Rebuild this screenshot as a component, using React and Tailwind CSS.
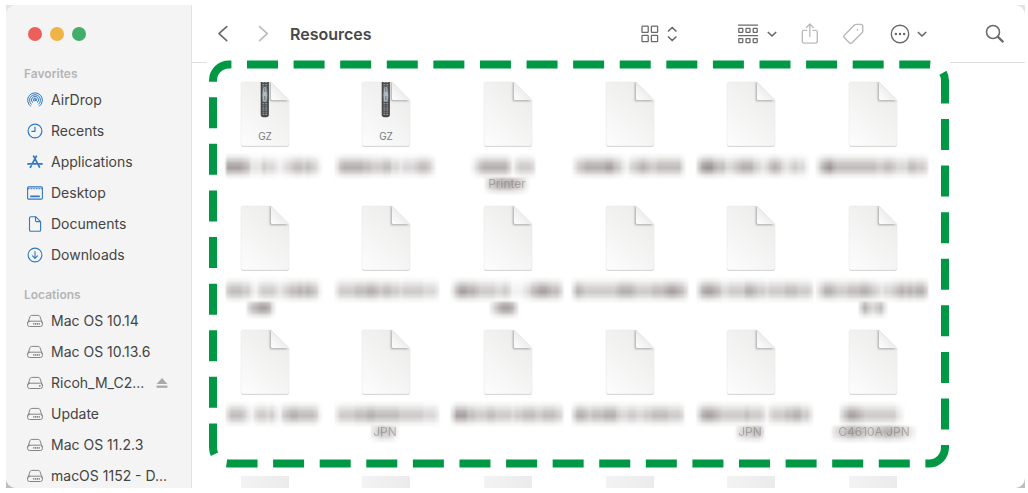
import React from "react";

const stroke = {
  fill: "none",
  stroke: "currentColor",
  strokeLinecap: "round",
  strokeLinejoin: "round",
};

function AirDropIcon() {
  return (
    <svg viewBox="0 0 16 16" className="h-4 w-4" {...stroke} strokeWidth="1">
      <path d="M3.6 14.2A7.4 7.4 0 1 1 12.4 14.2" />
      <path d="M4.2 12.2A5.5 5.5 0 1 1 11.8 12.2" />
      <path d="M5.300 10.3A3.6 3.6 0 1 1 10.700 10.3" />
      <path d="M6.8 9A1.7 1.7 0 1 1 9.2 9" />
      <circle cx="8" cy="8" r="0.4" fill="currentColor" />
    </svg>
  );
}

function ClockIcon() {
  return (
    <svg viewBox="0 0 16 16" className="h-4 w-4" {...stroke} strokeWidth="1.2">
      <circle cx="8" cy="8" r="6.9" />
      <path d="M8 4v4.3H4.8" />
    </svg>
  );
}

function AppsIcon() {
  return (
    <svg viewBox="0 0 16 16" className="h-4 w-4" {...stroke} strokeWidth="1.7">
      <path d="M6.6 2.2l5.9 10.9M9.4 2.2L5.3 9.6M4.2 11.8l-.8 1.5M1 9.9h8M12.2 9.9H15" />
    </svg>
  );
}

function DesktopIcon() {
  return (
    <svg viewBox="0 0 16 16" className="h-4 w-4" {...stroke} strokeWidth="1.1">
      <rect x="0.6" y="1.9" width="14.8" height="12.2" rx="1.2" />
      <path d="M1 3.6h14" strokeDasharray="0.9 0.7" strokeLinecap="butt" />
      <path d="M3.2 11.4h9.6" strokeWidth="1.8" strokeLinecap="butt" />
    </svg>
  );
}

function DocumentIcon() {
  return (
    <svg viewBox="0 0 16 16" className="h-4 w-4" {...stroke} strokeWidth="1.1">
      <path d="M3.8.7h4.8l5 5v8.2a1.3 1.3 0 0 1-1.3 1.3H3.8a1.3 1.3 0 0 1-1.3-1.3V2A1.3 1.3 0 0 1 3.8.7z" />
      <path d="M8.5.9v3.7a1 1 0 0 0 1 1h3.9" />
    </svg>
  );
}

function DownloadIcon() {
  return (
    <svg viewBox="0 0 16 16" className="h-4 w-4" {...stroke} strokeWidth="1.1">
      <circle cx="8" cy="8" r="6.9" />
      <path d="M8 4.5v6.6M5.5 8.8L8 11.3l2.5-2.5" />
    </svg>
  );
}

function DriveIcon({ external }) {
  return (
    <svg viewBox="0 0 16 16" className="h-4 w-4" {...stroke} strokeWidth="1">
      <path d="M.7 10.3L3 3.6A1.8 1.8 0 0 1 4.7 2.4h6.6A1.8 1.8 0 0 1 13 3.6l2.3 6.7" />
      <rect x="0.6" y="8.2" width="14.8" height="5.3" rx="1.9" />
      {external ? (
        <circle cx="12.6" cy="10.9" r="0.4" />
      ) : (
        <path d="M6.2 10.9h6.6" strokeWidth="1.6" strokeDasharray="1.2 0.6" strokeLinecap="butt" />
      )}
    </svg>
  );
}

const favorites = [
  ["AirDrop", AirDropIcon],
  ["Recents", ClockIcon],
  ["Applications", AppsIcon],
  ["Desktop", DesktopIcon],
  ["Documents", DocumentIcon],
  ["Downloads", DownloadIcon],
];

const locations = [
  { name: "Mac OS 10.14" },
  { name: "Mac OS 10.13.6" },
  { name: "Ricoh_M_C2...", external: true },
  { name: "Update" },
  { name: "Mac OS 11.2.3" },
  { name: "macOS 1152 - D..." },
];

function Sidebar() {
  return (
    <aside className="w-[186px] shrink-0 overflow-hidden border-r border-[#e2e2e2] bg-[#f4f4f4]">
      <div className="flex h-[58px] items-center gap-2 pl-[22px]">
        <button aria-label="Close" className="h-3.5 w-3.5 rounded-full bg-[#ec5f5b]" />
        <button aria-label="Minimize" className="h-3.5 w-3.5 rounded-full bg-[#f0b347]" />
        <button aria-label="Zoom" className="h-3.5 w-3.5 rounded-full bg-[#41ae6b]" />
      </div>
      <nav>
        <h2 className="pl-[18px] text-[12px] leading-[21px] font-semibold text-[#b5b5b5]">Favorites</h2>
        <ul>
          {favorites.map(([name, Icon]) => (
            <li key={name}>
              <a href="#" className="flex h-[31px] items-center gap-2 pl-[21px] text-[14px]">
                <span className="text-[#3178c2]"><Icon /></span>
                {name}
              </a>
            </li>
          ))}
        </ul>
        <h2 className="mt-3.5 pl-[18px] text-[12px] leading-[21px] font-semibold text-[#b5b5b5]">Locations</h2>
        <ul>
          {locations.map(({ name, external }) => (
            <li key={name} className="flex h-[31px] items-center">
              <a href="#" className="flex items-center gap-2 pl-[21px] text-[14px] whitespace-nowrap">
                <span className="text-[#858585]"><DriveIcon external={external} /></span>
                {name}
              </a>
              {external && (
                <button aria-label="Eject" className="ml-3 text-[#a9a9a9]">
                  <svg viewBox="0 0 12 12" className="h-3 w-3" fill="currentColor">
                    <path d="M6 .9l5.4 6.2H.6z" />
                    <rect x="0.6" y="8.6" width="10.8" height="2.2" />
                  </svg>
                </button>
              )}
            </li>
          ))}
        </ul>
      </nav>
    </aside>
  );
}

function ChevronDown() {
  return (
    <svg viewBox="0 0 12 12" className="h-3 w-3" {...stroke} strokeWidth="1.7">
      <path d="M2.3 4.5L6 8l3.7-3.5" />
    </svg>
  );
}

function Toolbar() {
  return (
    <header className="flex h-[57px] items-center pr-5 pl-6 text-[#6a6a6a]">
      <button aria-label="Back">
        <svg viewBox="0 0 16 20" className="h-5 w-4" {...stroke} strokeWidth="1.7">
          <path d="M10.7 2.6L3 9.6l7.7 7" />
        </svg>
      </button>
      <button aria-label="Forward" className="ml-6 text-[#b9b9b9]">
        <svg viewBox="0 0 16 20" className="h-5 w-4" {...stroke} strokeWidth="1.6">
          <path d="M3.6 2.6l7.7 7-7.7 7" />
        </svg>
      </button>
      <h1 className="ml-[18px] text-[16px] font-semibold text-[#484848]">Resources</h1>
      <button aria-label="View as icons" className="ml-auto flex items-center gap-2">
        <svg viewBox="0 0 18 18" className="h-[18px] w-[18px]" {...stroke} strokeWidth="1.3">
          <rect x="1" y="1.2" width="6.2" height="6.2" rx="0.6" />
          <rect x="10.4" y="1.2" width="6.2" height="6.2" rx="0.6" />
          <rect x="1" y="10.4" width="6.2" height="6.2" rx="0.6" />
          <rect x="10.4" y="10.4" width="6.2" height="6.2" rx="0.6" />
        </svg>
        <svg viewBox="0 0 12 18" className="h-[18px] w-3" {...stroke} strokeWidth="1.7">
          <path d="M1.500 6l3.7-3.5L8.900 6M1.500 12l3.7 3.5L8.900 12" />
        </svg>
      </button>
      <button aria-label="Group items" className="ml-[59px] flex items-center gap-2">
        <svg viewBox="0 0 20 20" className="h-5 w-5" {...stroke} strokeWidth="1.3" strokeLinecap="butt">
          <path d="M0 1.1h20M0 11.6h20" />
          <rect x="0.8" y="4.4" width="4" height="4" rx="0.5" />
          <rect x="8" y="4.4" width="4" height="4" rx="0.5" />
          <rect x="15.2" y="4.4" width="4" height="4" rx="0.5" />
          <rect x="0.8" y="14.6" width="4" height="4" rx="0.5" />
          <rect x="8" y="14.6" width="4" height="4" rx="0.5" />
          <rect x="15.2" y="14.6" width="4" height="4" rx="0.5" />
        </svg>
        <ChevronDown />
      </button>
      <button aria-label="Share" className="ml-[23px] text-[#bcbcbc]">
        <svg viewBox="0 0 18 22" className="h-[22px] w-[18px]" {...stroke} strokeWidth="1.4">
          <path d="M5.6 7.4H3a1.7 1.7 0 0 0-1.7 1.7v9.3a1.7 1.7 0 0 0 1.7 1.7h11.6a1.7 1.7 0 0 0 1.7-1.7V9.1a1.7 1.7 0 0 0-1.7-1.7H12" />
          <path d="M8.8 13.4V1.2M5.4 4.4l3.4-3.3 3.4 3.3" />
        </svg>
      </button>
      <button aria-label="Edit tags" className="ml-6 text-[#b9b9b9]">
        <svg viewBox="0 0 22 22" className="h-[22px] w-[22px]" {...stroke} strokeWidth="1.4">
          <path d="M11.2 2.2L1.3 12.3a1.6 1.6 0 0 0 0 2.3l5.2 5.3a1.6 1.6 0 0 0 2.3 0L19 9.8a2.6 2.6 0 0 0 .8-1.9V3.3a1.9 1.9 0 0 0-1.9-1.9h-4.8a2.6 2.6 0 0 0-1.9.8z" />
          <circle cx="14.4" cy="6.9" r="0.8" fill="currentColor" stroke="none" />
        </svg>
      </button>
      <button aria-label="More" className="ml-[25px] flex items-center gap-1.5">
        <svg viewBox="0 0 20 20" className="h-5 w-5" {...stroke} strokeWidth="1.4">
          <circle cx="10" cy="10" r="8.7" />
          <g fill="currentColor" stroke="none">
            <circle cx="5.9" cy="10" r="1.25" />
            <circle cx="10" cy="10" r="1.25" />
            <circle cx="14.1" cy="10" r="1.25" />
          </g>
        </svg>
        <ChevronDown />
      </button>
      <button aria-label="Search" className="ml-[57px]">
        <svg viewBox="0 0 20 20" className="h-5 w-5" {...stroke} strokeWidth="1.6">
          <circle cx="8" cy="8" r="6.5" />
          <path d="M12.9 12.9l4.9 4.7" strokeWidth="2.2" />
        </svg>
      </button>
    </header>
  );
}

function FileIcon({ gz }) {
  return (
    <svg viewBox="0 0 50 67" className="h-[67px] w-[50px]">
      <defs>
        <linearGradient id="paper" x1="0.1" y1="1" x2="0.8" y2="0">
          <stop offset="0" stopColor="#fcfcfc" />
          <stop offset="1" stopColor="#ebebea" />
        </linearGradient>
        <linearGradient id="fold" x1="0" y1="1" x2="0.55" y2="0.45">
          <stop offset="0" stopColor="#ffffff" />
          <stop offset="1" stopColor="#ebebeb" />
        </linearGradient>
        <filter id="soft" x="-50%" y="-50%" width="200%" height="200%">
          <feGaussianBlur stdDeviation="1.3" />
        </filter>
        <clipPath id="sheet">
          <path d="M3 1H31L49 19V63a2 2 0 0 1-2 2H3a2 2 0 0 1-2-2V3a2 2 0 0 1 2-2z" />
        </clipPath>
      </defs>
      <path d="M3 2H31L49 20V63.700a2 2 0 0 1-2 2H3a2 2 0 0 1-2-2V4a2 2 0 0 1 2-2z" fill="#c4c4c4" />
      <path
        d="M3 1H31L49 19V63a2 2 0 0 1-2 2H3a2 2 0 0 1-2-2V3a2 2 0 0 1 2-2z"
        fill="url(#paper)"
        stroke="#e6e6e6"
        strokeWidth="0.5"
      />
      <g clipPath="url(#sheet)">
        <path d="M30 1V20H48L31 1z" fill="#808080" opacity="0.65" filter="url(#soft)" />
      </g>
      <path d="M31 1V17.500a1.500 1.500 0 0 0 1.500 1.500H49z" fill="url(#fold)" />
      {gz && (
        <g>
          <path d="M20.700 1h8.200v32.500a2.800 2.800 0 0 1-2.800 2.800h-2.600a2.800 2.800 0 0 1-2.800-2.800z" fill="#47494b" />
          <path d="M24.800 1v33.500" stroke="#a9adb0" strokeWidth="4.800" strokeDasharray="0.8 1.100" />
          <path d="M24.800 1v33.500" stroke="#47494b" strokeWidth="0.900" />
          <path d="M23.200 6h3.200l1.100 8-.7 7h-4l-.7-7z" fill="#b0bac1" stroke="#5f6569" strokeWidth="0.6" />
          <path d="M24.800 7v4M24.800 15v4.500" stroke="#727a80" strokeWidth="1.200" />
          <text x="25" y="59" textAnchor="middle" fontSize="10" fontFamily="Inter, sans-serif" fill="#7a7a7a">GZ</text>
        </g>
      )}
    </svg>
  );
}

const CELL = 4;
const FALLOFF = [0.16, 0.5, 0.85, 1, 0.65, 0.2];
const FALLOFF_LOW = [0.8, 1, 0.75, 0.25];

/* Pixelated file name: every digit is the darkness of one mosaic column. */
function Mosaic({ x, y, tones, rows }) {
  return rows.flatMap((weight, r) =>
    tones.split("").map((tone, c) => (
      <rect
        key={`${r}-${c}`}
        x={x + c * CELL}
        y={y + r * CELL}
        width={CELL}
        height={CELL}
        fill="#6b6260"
        opacity={(Number(tone) / 9) * weight * 0.76}
      />
    ))
  );
}

function FileName({ first, second, text }) {
  return (
    <svg viewBox="0 0 122 44" className="h-11 w-[122px] overflow-visible">
      <g className="blur-[1px]">
        <Mosaic x={first[0]} y={0} tones={first[1]} rows={FALLOFF} />
        {second && <Mosaic x={second[0]} y={24} tones={second[1]} rows={FALLOFF_LOW} />}
      </g>
      {text && (
        <text x={second[0] + second[1].length * 2} y="34" textAnchor="middle" fontSize="12" fontFamily="Inter, sans-serif" fill="#7d7775" opacity="0.5">
          {text}
        </text>
      )}
    </svg>
  );
}

const files = [
  { gz: true, first: [22, "777765222433212345545431"] },
  { gz: true, first: [9, "2566666554445533233345542"] },
  { first: [24, "1356666664134443"], second: [38, "24566665431"], text: "Printer" },
  { first: [4, "2456666677542134565445555552"] },
  { first: [6, "4788655334566643235653234331"] },
  { first: [4, "2578655555555554455433355443"] },
  { first: [22, "455544213444323455656541"], second: [43, "3567762"] },
  { first: [9, "24444555665455443444443332"] },
  { first: [4, "2577665444433431112356776553"], second: [43, "2467763"] },
  { first: [3, "36544444444566654444555677653"] },
  { first: [6, "36776533444466544344445554443"] },
  { first: [4, "2466544455566543233456565664"], second: [47, "3643452"] },
  { first: [22, "355542134434214566555541"] },
  { first: [9, "24444555665555554444443332"], second: [45, "2354431"], text: "JPN" },
  { first: [4, "3777554445544443445554455543"] },
  { first: [3, "3665455566643344334455554443"] },
  { first: [6, "36776544444454443134445566442"], second: [45, "2344553"], text: "JPN" },
  { first: [28, "3577654444444421"], second: [20, "234566554345566554321"], text: "C4610A JPN" },
];

function FileGrid({ children }) {
  return <ul className="grid grid-cols-6">{children}</ul>;
}

/* Dashed callout round the files to select. */
function Callout() {
  return (
    <div className="pointer-events-none absolute top-px right-[80px] -bottom-[11px] left-[21px]">
      <svg className="h-full w-full overflow-visible">
        <rect
          x="0"
          y="0.5"
          rx="16"
          ry="16"
          style={{ width: "100%", height: "calc(100% - 1px)" }}
          fill="none"
          stroke="#009844"
          strokeWidth="8"
          strokeDasharray="31 15.590"
          strokeDashoffset="-18"
        />
      </svg>
    </div>
  );
}

export default function App() {
  return (
    <div className="h-screen bg-white pt-[5px] pr-[3px] pb-[5px] pl-[6px] font-['Inter',sans-serif] text-[#444444]">
      <div className="h-full bg-linear-to-b from-[#e4e4e4] to-[#bdbdbd]">
        <div className="flex h-full overflow-hidden rounded-[10px] bg-white">
          <Sidebar />
          <div className="min-w-0 flex-1">
            <Toolbar />
            <div className="flex justify-between">
              <div className="w-[15px] border-t border-[#dedede]" />
              <div className="w-[75px] border-t border-[#dedede]" />
            </div>
            <main>
              <section className="relative pt-[18px] pr-[91px] pl-3">
                <FileGrid>
                  {files.map((file, i) => (
                    <li key={i} className="flex h-[124px] flex-col items-center gap-1.5">
                      <FileIcon gz={file.gz} />
                      <FileName {...file} />
                    </li>
                  ))}
                </FileGrid>
                <Callout />
              </section>
              <section className="overflow-hidden pt-[23px] pr-[91px] pl-3">
                <FileGrid>
                  {[0, 1, 2, 3, 4, 5].map((i) => (
                    <li key={i} className="flex h-10 justify-center">
                      <div className="w-12 bg-linear-to-r from-[#f3f3f3] to-[#ebebeb]" />
                    </li>
                  ))}
                </FileGrid>
              </section>
            </main>
          </div>
        </div>
      </div>
    </div>
  );
}
